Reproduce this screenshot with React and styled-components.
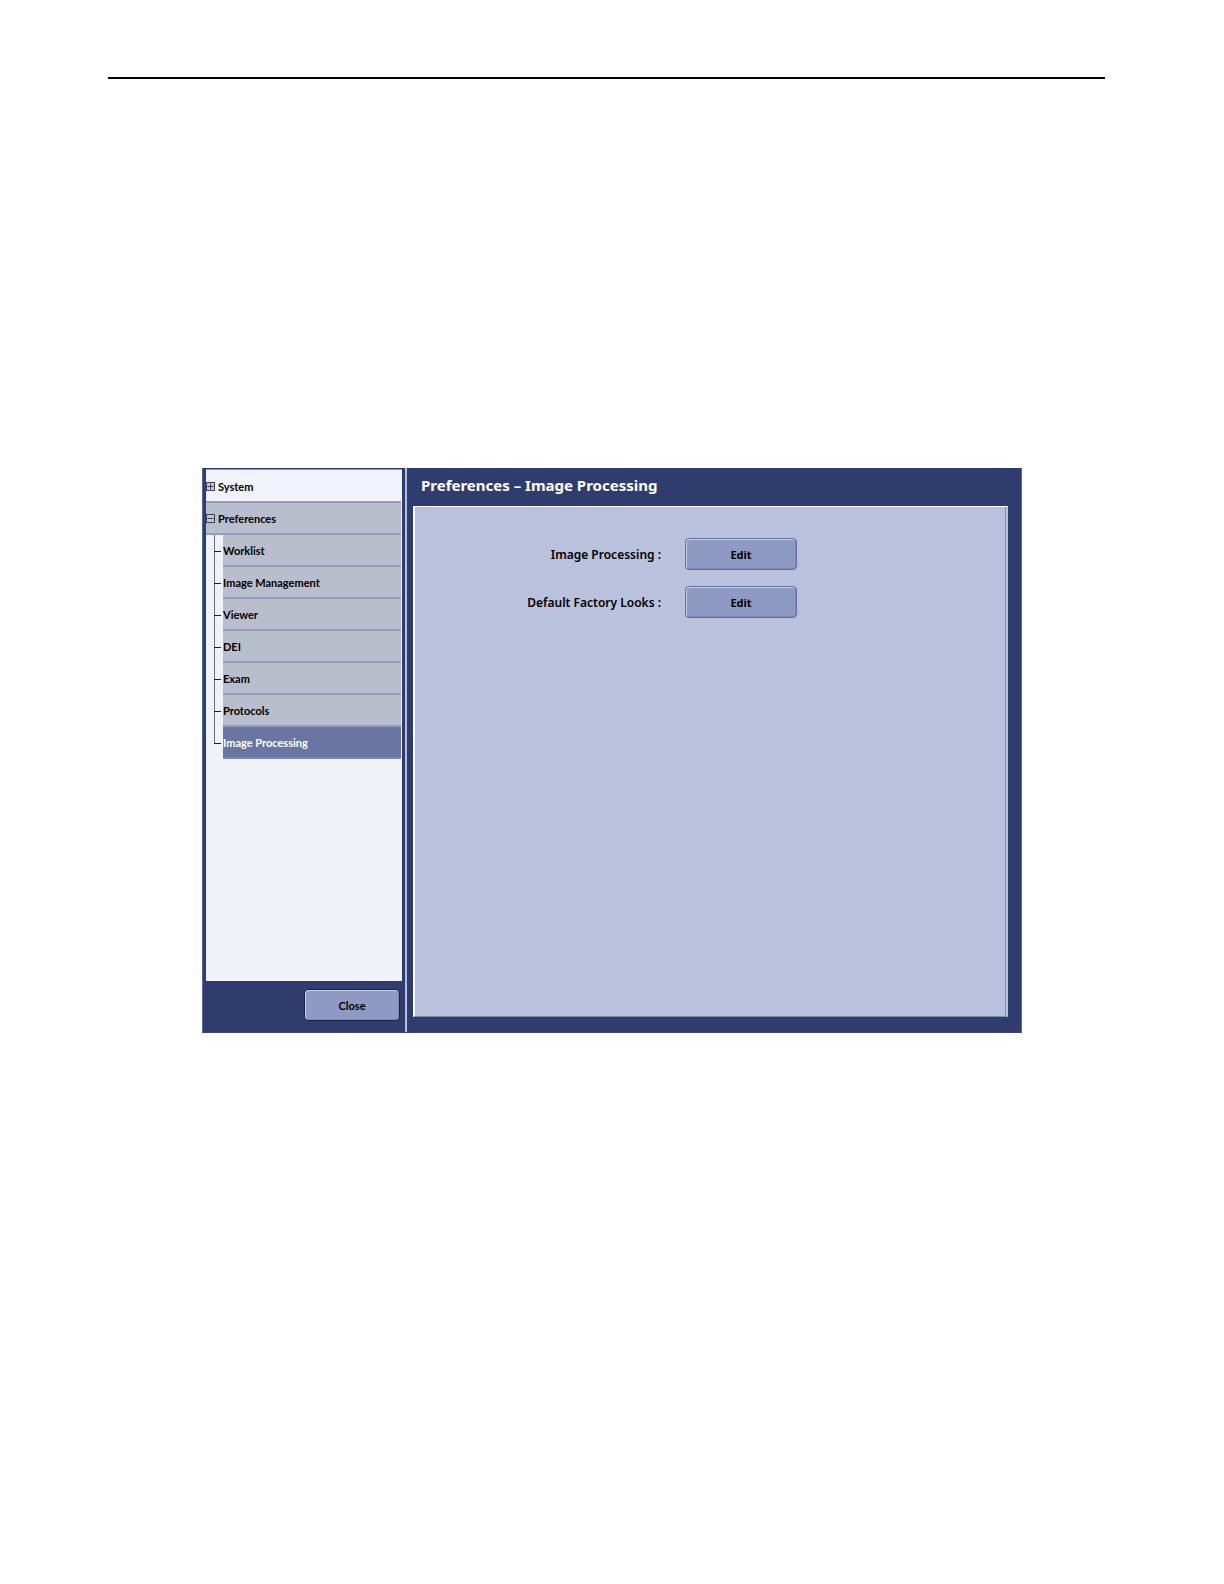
import React, { useState } from 'react';
import styled, { createGlobalStyle, css } from 'styled-components';

const treeItems = ['Worklist', 'Image Management', 'Viewer', 'DEI', 'Exam', 'Protocols', 'Image Processing'];

const settings = [
  { id: 'image-processing', label: 'Image Processing :' },
  { id: 'factory-looks', label: 'Default Factory Looks :' },
];

const ToggleIcon = ({ open }) => (
  <svg width="9" height="9" viewBox="0 0 9 9" fill="#c3c7d5" stroke="#3c3f55" aria-hidden="true">
    <rect x="0.5" y="0.5" width="8" height="8" />
    <path d="M1.5 4.5H7.5" />
    {!open && <path d="M4.5 1.5V7.5" />}
  </svg>
);

const App = () => {
  const [selected, setSelected] = useState('Image Processing');
  const [systemOpen, setSystemOpen] = useState(false);
  const [prefsOpen, setPrefsOpen] = useState(true);

  return (
    <Page>
      <GlobalStyle />
      <Rule />
      <Window>
        <Sidebar>
          <Tree>
            <GroupRow type="button" aria-expanded={systemOpen} onClick={() => setSystemOpen(!systemOpen)}>
              <ToggleIcon open={systemOpen} />
              System
            </GroupRow>
            <GroupRow type="button" $filled aria-expanded={prefsOpen} onClick={() => setPrefsOpen(!prefsOpen)}>
              <ToggleIcon open={prefsOpen} />
              Preferences
            </GroupRow>
            {prefsOpen && (
              <Branch>
                {treeItems.map((item) => (
                  <Leaf key={item}>
                    <LeafButton type="button" $selected={item === selected} onClick={() => setSelected(item)}>
                      {item}
                    </LeafButton>
                  </Leaf>
                ))}
              </Branch>
            )}
          </Tree>
          <SidebarFooter>
            <Button type="button" $dark>
              Close
            </Button>
          </SidebarFooter>
        </Sidebar>
        <Content>
          <Title>Preferences – {selected}</Title>
          <Panel>
            {settings.map(({ id, label }) => (
              <Setting key={id}>
                <SettingLabel htmlFor={id}>{label}</SettingLabel>
                <Button type="button" id={id}>
                  Edit
                </Button>
              </Setting>
            ))}
          </Panel>
        </Content>
      </Window>
    </Page>
  );
};

export default App;

const GlobalStyle = createGlobalStyle`
  * {
    box-sizing: border-box;
  }
  body {
    margin: 0;
    background: #ffffff;
    font-family: 'Noto Sans', 'Open Sans', sans-serif;
  }
  button {
    margin: 0;
    border: 0;
    font-family: inherit;
    cursor: pointer;
  }
`;

const Page = styled.main`
  padding: 77px 0 80px;
`;

const Rule = styled.hr`
  height: 2px;
  margin: 0 119px 389px 108px;
  border: 0;
  background: #000000;
`;

const Window = styled.section`
  display: flex;
  margin: 0 202px;
  border: 1px solid #5a6795;
  border-top: 0;
  border-bottom-color: #3a4676;
  background: #2f3d6e;
`;

const Sidebar = styled.nav`
  display: flex;
  flex-direction: column;
  flex: none;
  width: 204px;
  padding: 1px 3px 0;
  border-right: 2px solid #b4bfe0;
`;

const Tree = styled.div`
  flex: 1;
  min-height: 512px;
  padding: 1px 1px 0 0;
  border-top: 1px solid #8d97c0;
  background: #f0f2f8;
`;

const row = css`
  display: flex;
  align-items: center;
  width: 100%;
  height: 32px;
  border-bottom: 2px solid #949dc0;
  color: #000000;
  font-family: Lato, sans-serif;
  font-size: 11px;
  font-weight: 700;
  text-align: left;
`;

const GroupRow = styled.button`
  ${row}
  gap: 3px;
  padding: 0;
  background: ${({ $filled }) => ($filled ? '#b9becd' : '#f2f3fa')};
`;

const Branch = styled.ul`
  margin: 0;
  padding: 0 0 0 8px;
  list-style: none;
`;

const Leaf = styled.li`
  display: flex;
  align-items: center;
  /* trunk of the tree, the last item only gets its upper half */
  background: linear-gradient(#6b6e7c, #6b6e7c) 0 0 / 1px 100% no-repeat;
  &:last-child {
    background-size: 1px 50%;
  }
  &::before {
    content: '';
    flex: none;
    width: 7px;
    height: 1px;
    margin-right: 2px;
    background: #1c1d26;
  }
`;

const LeafButton = styled.button`
  ${row}
  padding: 0;
  background: #b9becd;
  ${({ $selected }) =>
    $selected &&
    css`
      border-bottom-color: #7d88b4;
      background: #6a75a4;
      color: #ffffff;
    `}
`;

const SidebarFooter = styled.div`
  display: flex;
  justify-content: flex-end;
  padding: 8px 2px 11px 0;
  button {
    width: 96px;
  }
`;

const Button = styled.button`
  width: 112px;
  height: 32px;
  padding: 0;
  border: 1px solid ${({ $dark }) => ($dark ? '#18234f' : '#66719f')};
  border-radius: 4px;
  background: #8f9ac2;
  box-shadow: inset 1px 1px 0 #c3cce8, inset -1px -1px 0 #7f8ab3;
  color: #000000;
  font-family: ${({ $dark }) => ($dark ? 'Lato, sans-serif' : 'inherit')};
  font-size: 11px;
  font-weight: 700;
`;

const Content = styled.div`
  display: flex;
  flex-direction: column;
  flex: 1;
  padding: 0 13px 15px 6px;
`;

const Title = styled.h1`
  margin: 0;
  padding: 0 8px 4px;
  color: #ffffff;
  font-size: 15px;
  font-weight: 700;
  line-height: 34px;
`;

const Panel = styled.div`
  display: flex;
  flex-direction: column;
  flex: 1;
  gap: 16px;
  padding-top: 31px;
  border: 1px solid #ffffff;
  border-left-width: 2px;
  border-right: 2px solid #b7c4dc;
  border-bottom-color: #7f8ba6;
  background: #b9c1dc;
  box-shadow: inset -1px 0 0 #84929f;
`;

const Setting = styled.div`
  display: grid;
  grid-template-columns: minmax(0, 246px) auto;
  justify-content: start;
  align-items: center;
  gap: 24px;
`;

const SettingLabel = styled.label`
  color: #000000;
  font-size: 12px;
  font-weight: 600;
  text-align: right;
`;
